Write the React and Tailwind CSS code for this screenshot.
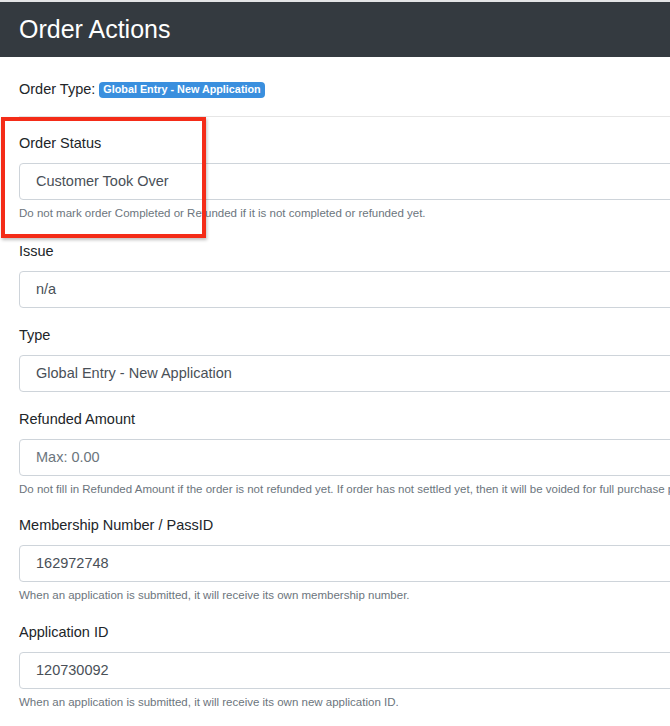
import React from "react";

function Field({ label, value, placeholder, help, mt }) {
  return (
    <div className={mt}>
      <div className="text-[14.5px] leading-[20px] text-[#212529]">{label}</div>
      <div className="mt-[10px] h-[37px] w-[700px] rounded-[4px] border border-[#ced4da] bg-white pl-[16px] flex items-center text-[14.5px] text-[#495057]">
        {placeholder ? <span className="text-[#6c757d]">{placeholder}</span> : value}
      </div>
      {help && (
        <div className="mt-[6px] text-[11.5px] leading-[14px] text-[#6c757d] whitespace-nowrap">{help}</div>
      )}
    </div>
  );
}

export default function App() {
  return (
    <div className="w-[670px] h-[726px] overflow-hidden bg-white font-['Liberation_Sans',Arial,sans-serif]">
      <div className="h-[2px] bg-[#e3e4e6]" />
      <div className="h-[55px] bg-[#343a40] flex items-center pl-[19px]">
        <h1 className="text-[25px] text-white leading-none">Order Actions</h1>
      </div>
      <div className="pl-[19px]">
        <div className="flex items-center h-[59px] pt-[6px] text-[14.5px] text-[#212529]">
          <span>Order Type:</span>
          <span className="ml-[4px] rounded-[4px] bg-[#3a8fde] px-[4px] h-[16px] flex items-center text-[10.8px] font-bold text-white">
            Global Entry - New Application
          </span>
        </div>
        <div className="h-px bg-[#e6e6e6]" />
        <div className="relative pt-[16px]">
          <div className="absolute left-[-18px] top-0 w-[205px] h-[121px] border-[4px] border-[#f42c18] shadow-[1px_2px_3px_rgba(0,0,0,0.25)] pointer-events-none z-10" />
          <Field
            label="Order Status"
            value="Customer Took Over"
            help="Do not mark order Completed or Refunded if it is not completed or refunded yet."
          />
          <Field label="Issue" value="n/a" mt="mt-[21px]" />
          <Field label="Type" value="Global Entry - New Application" mt="mt-[17px]" />
          <Field
            label="Refunded Amount"
            placeholder="Max: 0.00"
            help="Do not fill in Refunded Amount if the order is not refunded yet. If order has not settled yet, then it will be voided for full purchase price."
            mt="mt-[17px]"
          />
          <Field
            label="Membership Number / PassID"
            value="162972748"
            help="When an application is submitted, it will receive its own membership number."
            mt="mt-[19px]"
          />
          <Field
            label="Application ID"
            value="120730092"
            help="When an application is submitted, it will receive its own new application ID."
            mt="mt-[20px]"
          />
        </div>
      </div>
    </div>
  );
}
